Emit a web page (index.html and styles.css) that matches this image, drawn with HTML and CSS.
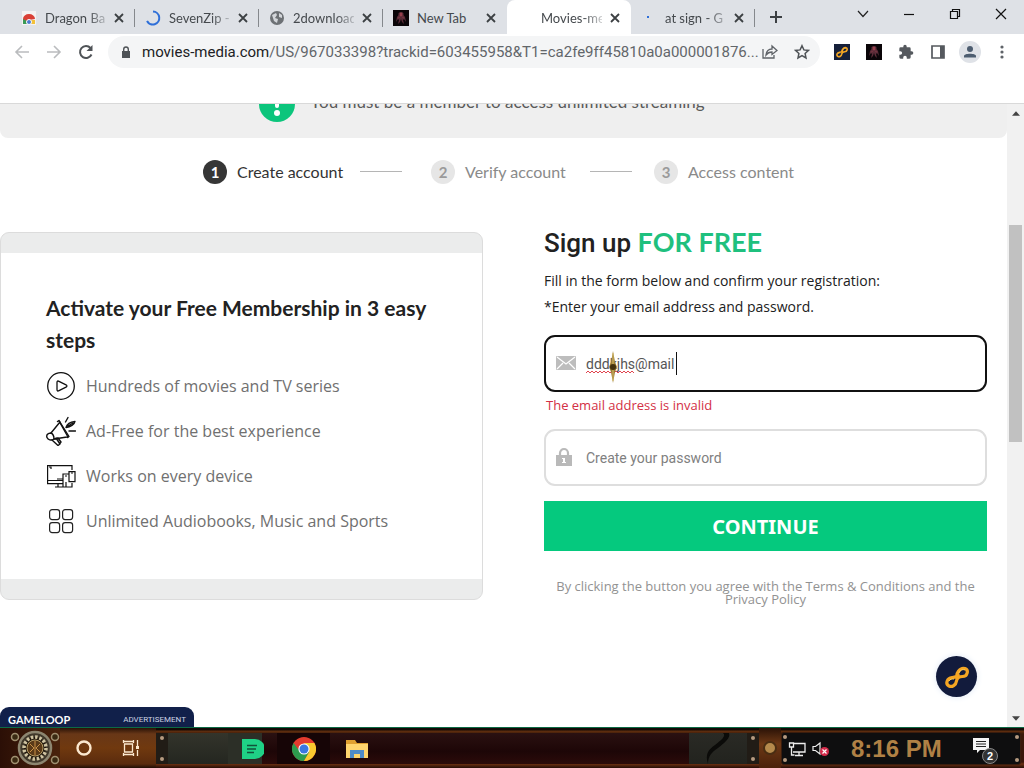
FILE: index.html
```html
<!DOCTYPE html>
<html lang="en">
<head>
<meta charset="utf-8">
<title>Movies-media</title>
<link rel="stylesheet" href="styles.css">
</head>
<body>
<svg class="defs" aria-hidden="true">
  <symbol id="x" viewBox="0 0 10 10"><path d="M1 1l8 8M9 1l-8 8" stroke="#3c4043" stroke-width="1.8" fill="none"/></symbol>
  <symbol id="loop" viewBox="0 0 24 24">
    <path d="M12.500 13.500C10 9 15 2 20 3.500c4 1.500 2.500 8-2.500 8-3.500 0-5.500 1-6 4.500-.5 4-4.500 6.500-7.500 5-4-2-2-8 3-8.500 3.500-.4 5-.5 6-3" fill="none" stroke="#f5a623" stroke-width="3.200" stroke-linecap="round"/>
    <path d="M14 8c1-3 4-4 6-3M4 16c1-2 3-2 5-2" fill="none" stroke="#ffd05a" stroke-width="1"/>
  </symbol>
  <symbol id="figure" viewBox="0 0 16 16">
    <rect width="16" height="16" fill="#0a0508"/>
    <path d="M8 2c2 0 3 1 2.500 3L12 7l1 5-2-3-1 1 1 4-2-2-1-3-1 3-2 2 1-4-1-1-2 3 1-5 1.500-2C5 3 6 2 8 2z" fill="#5b2c38"/>
    <path d="M7 3h2v3H7zM5 8l2-1M11 8L9 7" fill="#98404d" stroke="#98404d" stroke-width=".5"/>
  </symbol>
</svg>

<header class="tabs">
  <div class="tab">
    <svg class="fav" viewBox="0 0 16 16"><rect x="1" y="1" width="14" height="14" fill="#f4f2f2"/><path d="M2 13V9a6 5 0 0 1 12 0l-6 1z" fill="#d93f35"/><path d="M2 14V9l6 3v2z" fill="#3a9a55"/><path d="M9 10h5v4H9z" fill="#f3c13a"/><circle cx="8" cy="12" r="2.500" fill="#4a78cf" stroke="#fff"/></svg>
    <span class="title">Dragon Bal</span><button class="close" aria-label="Close tab"><svg><use href="#x"/></svg></button>
  </div>
  <div class="tab">
    <svg class="fav" viewBox="0 0 16 16"><path d="M8 1.500a6.500 6.500 0 1 1-6 9.500" fill="none" stroke="#2f6fd8" stroke-width="2"/></svg>
    <span class="title">SevenZip -</span><button class="close" aria-label="Close tab"><svg><use href="#x"/></svg></button>
  </div>
  <div class="tab">
    <svg class="fav" viewBox="0 0 16 16"><circle cx="8" cy="8" r="7" fill="#6d7175"/><path d="M3 5l4-2 1 2-2 3 3 1-1 4-3-2-1-3zM10 3l3 2v3l-3-1z" fill="#d3d6da"/></svg>
    <span class="title">2download</span><button class="close" aria-label="Close tab"><svg><use href="#x"/></svg></button>
  </div>
  <div class="tab last">
    <svg class="fav"><use href="#figure"/></svg>
    <span class="title">New Tab</span><button class="close" aria-label="Close tab"><svg><use href="#x"/></svg></button>
  </div>
  <div class="tab active">
    <span class="fav"></span>
    <span class="title">Movies-me</span><button class="close" aria-label="Close tab"><svg><use href="#x"/></svg></button>
  </div>
  <div class="tab">
    <svg class="fav" viewBox="0 0 16 16"><rect x="6" y="6" width="2" height="2" fill="#2f6fd8"/></svg>
    <span class="title">at sign - G</span><button class="close" aria-label="Close tab"><svg><use href="#x"/></svg></button>
  </div>
  <button class="new" aria-label="New tab"><svg viewBox="0 0 12 12"><path d="M6 0v12M0 6h12" stroke="#3c4043" stroke-width="2"/></svg></button>
  <div class="win">
    <button aria-label="Search tabs"><svg viewBox="0 0 12 12"><path d="M1 3l5 5.500L11 3" fill="none" stroke="#222" stroke-width="1.200"/></svg></button>
    <button aria-label="Minimize"><svg viewBox="0 0 12 12"><path d="M1 6.500h10" stroke="#111" stroke-width="1.200"/></svg></button>
    <button aria-label="Restore"><svg viewBox="0 0 12 12"><path d="M1.500 3.500h7v7h-7zM3.500 3V1.500h7v7H9" fill="none" stroke="#111" stroke-width="1.200"/></svg></button>
    <button aria-label="Close"><svg viewBox="0 0 12 12"><path d="M1 1l10 10M11 1L1 11" stroke="#111" stroke-width="1.200"/></svg></button>
  </div>
</header>

<nav class="toolbar">
  <button class="tool" aria-label="Back"><svg viewBox="0 0 16 16"><path d="M15 8H2M8 2L2 8l6 6" fill="none" stroke="#babcbe" stroke-width="1.600"/></svg></button>
  <button class="tool" aria-label="Forward"><svg viewBox="0 0 16 16"><path d="M1 8h13M8 2l6 6-6 6" fill="none" stroke="#babcbe" stroke-width="1.600"/></svg></button>
  <button class="tool" aria-label="Reload"><svg viewBox="0 0 16 16"><path d="M13.500 10.500A6 6 0 1 1 12.500 4" fill="none" stroke="#4f5357" stroke-width="2"/><path d="M14.500 1v6h-6z" fill="#4f5357"/></svg></button>
  <div class="omni">
    <svg class="lock" viewBox="0 0 10 13"><path d="M1 5h8v7H1z" fill="#4f5357"/><path d="M2.700 5V3.300a2.300 2.300 0 0 1 4.600 0V5" fill="none" stroke="#4f5357" stroke-width="1.400"/></svg>
    <span class="url"><b>movies-media.com</b>/US/967033398?trackid=603455958&amp;T1=ca2fe9ff45810a0a000001876...</span>
    <button class="tool" aria-label="Share"><svg viewBox="0 0 16 16"><path d="M1 5v9h11v-3" fill="none" stroke="#5f6368" stroke-width="1.300"/><path d="M4 11c.5-4 3-6 6-6V2l5 4.500-5 4V8c-3 0-4.500 1-6 3z" fill="none" stroke="#5f6368" stroke-width="1.300"/></svg></button>
    <button class="tool" aria-label="Bookmark"><svg viewBox="0 0 16 16"><path d="M8 1.700l1.900 4.200 4.600.5-3.400 3.100.9 4.500-4-2.300L4 14l.9-4.500L1.500 6.400l4.600-.5z" fill="none" stroke="#4f5357" stroke-width="1.500"/></svg></button>
  </div>
  <button class="tool" aria-label="GameLoop"><svg viewBox="0 0 16 16"><rect width="16" height="16" fill="#16203a"/><use href="#loop" x="2" y="2" width="12" height="12"/></svg></button>
  <button class="tool" aria-label="Theme"><svg><use href="#figure"/></svg></button>
  <button class="tool" aria-label="Extensions"><svg viewBox="0 0 24 24"><path d="M20.500 11H19V7a2 2 0 0 0-2-2h-4V3.500a2.500 2.500 0 0 0-5 0V5H4a2 2 0 0 0-2 2v3.800h1.500a2.700 2.700 0 0 1 0 5.400H2V20a2 2 0 0 0 2 2h3.800v-1.500a2.700 2.700 0 0 1 5.400 0V22H17a2 2 0 0 0 2-2v-4h1.500a2.500 2.500 0 0 0 0-5z" fill="#55595e"/></svg></button>
  <button class="tool" aria-label="Side panel"><svg viewBox="0 0 16 16"><path d="M2 2h12v12H2z" fill="none" stroke="#55595e" stroke-width="1.700"/><path d="M10 2h4v12h-4z" fill="#55595e"/></svg></button>
  <button class="tool avatar" aria-label="Profile"><svg viewBox="0 0 22 22"><circle cx="11" cy="11" r="11" fill="#dfe2e7"/><circle cx="11" cy="8" r="3" fill="#4d5d70"/><path d="M5 16.500v-1.500c0-3 12-3 12 0v1.500z" fill="#4d5d70"/></svg></button>
  <button class="tool" aria-label="Menu"><svg viewBox="0 0 16 16"><g fill="#5f6368"><circle cx="8" cy="3" r="1.600"/><circle cx="8" cy="8" r="1.600"/><circle cx="8" cy="13" r="1.600"/></g></svg></button>
</nav>
<div class="bookmarks"></div>

<div class="view">
  <main class="page">
    <div class="banner">
      <svg class="alert" viewBox="0 0 36 36"><circle cx="18" cy="18" r="18" fill="#0cc57c"/><path d="M18 8v12" stroke="#fff" stroke-width="4" stroke-linecap="round"/><circle cx="18" cy="27" r="3" fill="#fff"/></svg>
      <p>You must be a member to access unlimited streaming</p>
    </div>

    <ol class="steps">
      <li class="step on"><i>1</i>Create account</li>
      <li class="rule"></li>
      <li class="step"><i>2</i>Verify account</li>
      <li class="rule late"></li>
      <li class="step"><i>3</i>Access content</li>
    </ol>

    <div class="cols">
      <section class="card">
        <div class="inner">
          <h2>Activate your Free Membership in 3 easy steps</h2>
          <ul>
            <li><svg viewBox="0 0 30 30"><g fill="none" stroke="#111" stroke-width="1.300"><circle cx="15" cy="15" r="13.300"/><path d="M11 11.500c0-1.500.8-1.800 2-1.200l7 3.500c1.200.7 1.200 1.700 0 2.400l-7 3.500c-1.200.6-2 .3-2-1.200z"/></g></svg>Hundreds of movies and TV series</li>
            <li><svg viewBox="0 0 30 30"><g fill="none" stroke="#111" stroke-width="1.400" stroke-linejoin="round" stroke-linecap="round"><path d="M13 5l9 16M14 6L5 17M21 21l-13 2"/><path d="M11.500 5.500l1.500-1L23 20.500l-1.500 1M5 17c-3 0-5 2-4 4.500S5 25 8 23c0-3-1-5-3-6z"/><path d="M6 24l6 5.500 2-1.500-4-6M9 23l3-1 3 4-1.500 2M19.500 6L22 1.500M23 15h6.500M20 11.500c1-3.500 4-5.500 9-6-.5 3-4.500 5.500-9 6zM22 10l5-3"/></g></svg>Ad-Free for the best experience</li>
            <li><svg viewBox="0 0 30 30"><g fill="none" stroke="#111" stroke-width="1.200"><path d="M26 9V4.600H1.600v18h16M1.600 19.500h15M12 23v3M9 26h17M17 26V13h6M23 10.600h6v10h-6zM20 21v5h6v-4M11 18h6"/><path d="M3 6h2v2M25 12h2M19 15h2"/></g></svg>Works on every device</li>
            <li><svg viewBox="0 0 30 30"><g fill="none" stroke="#222" stroke-width="1.200"><rect x="3.600" y="3.600" width="10" height="10" rx="2.500"/><rect x="16.600" y="3.600" width="10" height="10" rx="2.500"/><rect x="3.600" y="16.600" width="10" height="10" rx="2.500"/><rect x="16.600" y="16.600" width="10" height="10" rx="2.500"/></g></svg>Unlimited Audiobooks, Music and Sports</li>
          </ul>
        </div>
      </section>

      <form class="signup">
        <h1>Sign up <span>FOR FREE</span></h1>
        <p class="lead">Fill in the form below and confirm your registration:<br>*Enter your email address and password.</p>
        <div class="field">
          <svg class="ico" viewBox="0 0 20 14"><rect width="20" height="14" rx="1" fill="#bdbdbd"/><path d="M1 1l9 7 9-7M1 13l6-6M19 13l-6-6" fill="none" stroke="#fff" stroke-width="1.200"/></svg>
          <input class="focus" type="text" aria-label="Email address" value="dddkjhs@mail">
          <svg class="squiggle" viewBox="0 0 48 4"><path d="M0 3l2-2 2 2 2-2 2 2 2-2 2 2 2-2 2 2 2-2 2 2 2-2 2 2 2-2 2 2 2-2 2 2 2-2 2 2 2-2 2 2 2-2 2 2 2-2 2 2" fill="none" stroke="#e0454f" stroke-width="1"/></svg>
          <span class="caret"></span>
          <svg class="pointer" viewBox="0 0 8 32"><path d="M4 0l2 11 2 5-2 5-2 11-2-11-2-5 2-5z" fill="#9a7c35"/><path d="M4 2v28" stroke="#d8bd6a"/><circle cx="4" cy="16" r="3" fill="#43320f"/></svg>
        </div>
        <p class="error">The email address is invalid</p>
        <div class="field">
          <svg class="ico pad" viewBox="0 0 16 18"><path d="M0 7h16v11H0z" fill="#b9b9b9"/><path d="M4 7V5a4 4 0 0 1 8 0v2" fill="none" stroke="#b9b9b9" stroke-width="2.200"/><path d="M6 10h3v4h1v1H6v-1h1v-3H6z" fill="#fff"/></svg>
          <input type="password" aria-label="Password" placeholder="Create your password">
        </div>
        <button class="go" type="button">CONTINUE</button>
        <p class="terms">By clicking the button you agree with the Terms &amp; Conditions and the Privacy Policy</p>
      </form>
    </div>
  </main>
  <div class="scroll">
    <svg viewBox="0 0 9 5"><path d="M0 5l4.500-5L9 5z" fill="#444"/></svg>
    <div class="track"><div class="thumb"></div></div>
    <svg viewBox="0 0 9 5"><path d="M0 0l4.500 5L9 0z" fill="#444"/></svg>
  </div>
  <button class="fab" aria-label="GameLoop"><svg><use href="#loop"/></svg></button>
  <div class="ad"><b>GAMELOOP</b><span>ADVERTISEMENT</span></div>
</div>

<footer class="taskbar">
  <button class="start" aria-label="Start">
    <svg viewBox="0 0 60 38">
      <g fill="#3a2a12" stroke="#a09070" stroke-width="1.500"><circle cx="15" cy="8" r="3.500"/><circle cx="55" cy="8" r="3.500"/><circle cx="15" cy="31" r="3.500"/><circle cx="55" cy="31" r="3.500"/></g>
      <circle cx="35" cy="19" r="16" fill="#41392b" stroke="#8d8670" stroke-width="2.500"/>
      <circle cx="35" cy="19" r="11" fill="#20170c" stroke="#cfc3a0" stroke-width="3.500" stroke-dasharray="2.500 1.800"/>
      <circle cx="35" cy="19" r="8" fill="#5a3a18" stroke="#b59a62"/>
      <path d="M35 12v14M30 15l4 4-4 4M40 15l-4 4 4 4" stroke="#c99046" fill="none"/>
    </svg>
  </button>
  <div class="leather">
    <button aria-label="Search"><svg viewBox="0 0 18 18"><circle cx="9" cy="9" r="6.500" fill="none" stroke="#fbe8cf" stroke-width="2.400"/></svg></button>
    <button aria-label="Task view"><svg viewBox="0 0 18 18"><path d="M1 2.500h11M1 15.500h11M2.500 5h8v8h-8zM1.500 1v3M11.500 1v3M1.500 14v3M11.500 14v3M15.500 1v6M15.500 11v6" fill="none" stroke="#fbe8cf" stroke-width="1.300"/><path d="M14 7h3v3h-3z" fill="#fbe8cf"/></svg></button>
  </div>
  <div class="apps">
    <div class="rivets"><i></i><i></i></div>
    <div class="slot"></div>
    <button class="msg" aria-label="Messages"><svg viewBox="0 0 22 22"><path d="M0 1h13a10 10 0 0 1 0 20H0z" fill="#1fd286"/><path d="M5 7.500h10M5 11h9M5 14.500h7" stroke="#11533a" stroke-width="1.500"/></svg></button>
    <button class="chrome" aria-label="Chrome"><svg viewBox="0 0 24 24"><circle cx="12" cy="12" r="12" fill="#e33b2e"/><path d="M1.600 6A12 12 0 0 0 12 24l5.200-9L12 12H6z" fill="#2d9c4e"/><path d="M12 24A12 12 0 0 0 22.400 6H12l5.200 9z" fill="#f9c92f"/><circle cx="12" cy="12" r="5.600" fill="#fff"/><circle cx="12" cy="12" r="4.500" fill="#3b78e0"/></svg></button>
    <button aria-label="File Explorer"><svg viewBox="0 0 24 22"><path d="M1 2h9l2 3h11v15H1z" fill="#e0a030"/><path d="M1 6h22v14H1z" fill="#ffd56e"/><path d="M5 20v-8h14v8h-4v-4H9v4z" fill="#4f8bc8"/></svg></button>
    <div class="worn"><svg viewBox="0 0 58 31"><path d="M34 0c4 3-3 8-8 12-7 5-10 9-7 19 0-8 4-12 10-16 6-5 13-10 11-15z" fill="#0b0b09"/></svg></div>
    <div class="rivets"><i></i><i></i></div>
  </div>
  <div class="knob"></div>
  <div class="tray">
    <div class="rivets"><i></i><i></i></div>
    <svg class="net" viewBox="0 0 18 16"><path d="M5 2.500h12v8.500H5M11 11v3M7 14.500h8M1.500 2h4v4h-4zM3.500 6v8h3" fill="none" stroke="#eee" stroke-width="1.300"/></svg>
    <svg class="vol" viewBox="0 0 18 16"><path d="M1 5.500h2.500L8 2v11L3.500 9.500H1z" fill="none" stroke="#eee" stroke-width="1.200"/><circle cx="12.500" cy="10.500" r="4.500" fill="#d32a4a"/><path d="M10.500 8.500l4 4M14.500 8.500l-4 4" stroke="#fff" stroke-width="1.200"/></svg>
    <time>8:16 PM</time>
    <button class="note" aria-label="Notifications"><svg viewBox="0 0 24 24"><path d="M0 1h16v12H7l-3 3v-3H0z" fill="#f5f5f5"/><path d="M3 4.500h10M3 7h10M3 9.500h10" stroke="#222"/></svg><b>2</b></button>
    <div class="rivets"><i></i><i></i></div>
  </div>
</footer>
</body>
</html>
```
FILE: styles.css
```css
* { box-sizing: border-box; }
body {
  margin: 0;
  height: 100vh;
  display: flex;
  flex-direction: column;
  overflow: hidden;
  background: #fff;
  color: #212121;
  font-family: "Open Sans", "Noto Sans", sans-serif;
}
button { border: 0; padding: 0; margin: 0; background: none; font: inherit; color: inherit; display: flex; align-items: center; justify-content: center; }
h1, h2, p, ol, ul { margin: 0; padding: 0; font-weight: 400; }
li { list-style: none; }
svg { display: block; flex: none; }
.defs { position: absolute; width: 0; height: 0; }

/* Browser tabs */
.tabs { display: flex; height: 34px; flex: none; padding-left: 11px; background: #dee1e6; }
.tab { position: relative; flex: 0 1 124px; min-width: 0; display: flex; align-items: center; gap: 8px; padding: 2px 11px 0 10px; font-family: Lato, sans-serif; font-size: 13px; color: #45494d; }
.tab::after { content: ""; position: absolute; right: 0; top: 9px; width: 1px; height: 18px; background: #85888c; }
.tab.last::after, .tab.active::after { display: none; }
.tab.active { background: #fff; border-radius: 8px 8px 0 0; }
.fav { width: 16px; height: 16px; flex: none; }
.title { flex: 1; min-width: 0; white-space: nowrap; -webkit-mask-image: linear-gradient(90deg, #000 70%, transparent 110%); mask-image: linear-gradient(90deg, #000 70%, transparent 110%); }
.tab.last .title { -webkit-mask-image: none; mask-image: none; }
.close svg { width: 10px; height: 10px; }
.new { width: 42px; }
.new svg { width: 12px; height: 12px; }
.win { margin-left: auto; display: flex; height: 28px; }
.win button { width: 46px; }
.win svg { width: 12px; height: 12px; }

/* Toolbar */
.toolbar { display: flex; align-items: center; height: 36px; flex: none; padding: 0 6px; }
.tool { width: 32px; height: 32px; flex: none; }
.tool svg { width: 16px; height: 16px; }
.tool.avatar svg { width: 22px; height: 22px; }
.omni { flex: 1; min-width: 0; display: flex; align-items: center; height: 32px; margin: 0 6px; padding: 0 2px 0 13px; border-radius: 16px; background: #f4f5f6; }
.lock { width: 10px; height: 13px; margin-right: 11px; }
.url { flex: 1; min-width: 0; white-space: nowrap; font-family: Roboto, sans-serif; font-size: 15px; color: #62666a; }
.url b { font-weight: 400; color: #202124; }
.bookmarks { height: 34px; flex: none; border-bottom: 1px solid #d9d9d9; }

/* Web page */
.view { position: relative; flex: 1; min-height: 0; display: flex; }
.page { flex: 1; min-width: 0; overflow: hidden; }
.banner { display: flex; align-items: flex-end; justify-content: center; gap: 15px; height: 34px; padding: 0 43px 16px 0; overflow: hidden; border-radius: 0 0 8px 8px; background: #efefef; color: #5a5a5a; }
.banner p { line-height: 40px; font-family: Lato, sans-serif; font-size: 17px; }
.alert { width: 36px; height: 36px; }
.steps { display: flex; align-items: center; height: 67px; padding-left: 203px; font-family: Lato, sans-serif; font-size: 16px; color: #8a8a8a; white-space: nowrap; }
.step { flex: none; display: flex; align-items: center; gap: 10px; width: 131px; }
.step.on { width: 136px; color: #333; }
.step i { flex: none; display: flex; align-items: center; justify-content: center; width: 24px; height: 24px; border-radius: 50%; background: #e6e6e6; color: #9a9a9a; font-size: 15px; font-weight: 700; font-style: normal; }
.step.on i { background: #363636; color: #fff; }
.rule { width: 42px; height: 1px; margin: 0 29px 0 21px; background: #b5b5b5; }
.rule.late { margin: 0 22px 0 28px; }
.cols { display: grid; grid-template-columns: 483fr 443fr; gap: 61px; align-items: start; margin-top: 27px; padding-right: 20px; }

.card { padding: 20px 0; border: 1px solid #dcdcdc; border-radius: 9px; background: #ebecec; }
.inner { padding: 39px 45px 36px; background: #fff; }
.card h2 { font-family: Lato, sans-serif; font-size: 21px; line-height: 32px; font-weight: 700; color: #222; }
.card ul { padding-top: 7px; }
.card li { display: flex; align-items: center; gap: 10px; height: 45px; font-size: 16px; color: #707070; }
.card li svg { width: 30px; height: 30px; }

.signup h1 { height: 32px; font-family: Roboto, sans-serif; font-size: 26px; line-height: 32px; margin-top: -6px; font-weight: 500; white-space: nowrap; }
.signup h1 span { font-family: Lato, sans-serif; font-size: 27px; font-weight: 700; color: #1fc07e; }
.lead { margin-top: 10px; font-size: 14px; line-height: 26px; white-space: nowrap; }
.field { position: relative; margin-top: 15px; }
.field input { display: block; width: 100%; height: 57px; padding: 0 20px 0 40px; border: 2px solid #dedede; border-radius: 11px; outline: 0; background: #fff; font-family: Roboto, sans-serif; font-size: 14px; color: #555; }
.field input.focus { border-color: #111; }
.field input::placeholder { color: #808080; opacity: 1; }
.ico { position: absolute; left: 12px; top: 18px; width: 20px; height: 20px; }
.ico.pad { width: 16px; }
.squiggle { position: absolute; left: 42px; top: 35px; width: 48px; height: 4px; }
.caret { position: absolute; left: 132px; top: 17px; width: 1px; height: 23px; background: #111; }
.pointer { position: absolute; left: 65px; top: 16px; width: 8px; height: 32px; }
.error { height: 22px; padding-left: 2px; font-size: 13px; line-height: 26px; color: #d32f45; }
.go { width: 100%; height: 50px; margin-top: 15px; background: #05c97e; color: #fff; font-family: "Noto Sans", sans-serif; font-size: 20px; font-weight: 700; }
.terms { padding: 29px 10px 0; text-align: center; font-size: 13px; line-height: 13px; color: #929292; }

.scroll { width: 17px; flex: none; display: flex; flex-direction: column; align-items: center; padding: 7px 2px 6px; background: #f1f1f1; }
.scroll svg { width: 8px; height: 5px; }
.track { flex: 1; width: 100%; padding-top: 109px; }
.thumb { height: 217px; background: #c1c1c1; }
.fab { position: absolute; right: 47px; bottom: 30px; width: 41px; height: 41px; border-radius: 50%; background: #121b3c; box-shadow: 0 0 6px #dfe8f5; }
.fab svg { width: 24px; height: 24px; }
.ad { position: absolute; left: 0; bottom: 0; display: flex; align-items: center; justify-content: space-between; width: 194px; height: 20px; padding: 4px 8px 0; border-radius: 9px 9px 0 0; background: #11204a; color: #cdd3e2; font-family: Roboto, sans-serif; font-size: 8px; }
.ad b { font-family: Lato, sans-serif; font-size: 11px; font-weight: 700; color: #fff; }

/* Desktop taskbar */
.taskbar { display: flex; height: 41px; flex: none; padding-right: 3px; border-top: 1px solid #0d6a45; background: linear-gradient(#120906 0 2px, #63300f 3px, #3a1a0a 6px, #3a1509 34px, #6b3012 36px, #250d06); }
.start { width: 60px; background: linear-gradient(90deg, #2b0f06, #4a230c); }
.start svg { width: 60px; height: 38px; }
.leather { display: flex; width: 96px; background: linear-gradient(#2a1207, #683717 15%, #70390f 50%, #5a2b0e 90%, #200d05); }
.leather button { width: 47px; }
.leather svg { width: 18px; height: 18px; }
.apps { flex: 1; min-width: 0; display: flex; margin: 5px 0 4px; border-radius: 4px; background: linear-gradient(#2a1111, #1d0607 60%, #2c0b0a); }
.slot { width: 60px; background: linear-gradient(#33342b, #242620); }
.apps button { width: 53px; }
.apps button.msg { width: 49px; background: linear-gradient(90deg, #2c2f27 70%, transparent 70%); }
.apps button.chrome { background: #160506; }
.apps svg { width: 24px; height: 24px; }
.apps .msg svg { width: 22px; height: 22px; }
.worn { margin-left: auto; background: linear-gradient(#2a2a25, #22231e); }
.apps .worn svg { width: 58px; height: 31px; }
.rivets { display: flex; flex-direction: column; justify-content: space-between; padding: 3px 4px; background: #211c16; }
.rivets i { width: 4px; height: 4px; border-radius: 50%; background: #b59a80; }
.knob { width: 22px; display: flex; align-items: center; justify-content: center; background: linear-gradient(#2a1207, #6d3815 40%, #4a210b); }
.knob::before { content: ""; width: 10px; height: 10px; border-radius: 50%; border: 2px solid #4a2d12; background: #b58a4c; }
.tray { display: flex; align-items: center; width: 240px; margin: 4px 0 3px; border-radius: 3px; border: 1px solid #3a1d0e; background: #0e0e0f; }
.tray .rivets { align-self: stretch; background: none; padding: 2px 1px; }
.net { width: 18px; height: 16px; }
.vol { width: 18px; height: 16px; margin-left: 6px; }
.tray time { margin-left: 21px; font-family: "Liberation Sans", sans-serif; font-size: 24px; line-height: 32px; font-weight: 700; color: #b08145; white-space: nowrap; }
.note { position: relative; margin-left: auto; margin-right: 16px; width: 26px; height: 24px; }
.note svg { width: 24px; height: 24px; }
.note b { position: absolute; right: 0; bottom: -3px; width: 16px; height: 16px; border-radius: 50%; border: 1px solid #888; background: #333; color: #fff; font-family: "Liberation Sans", sans-serif; font-size: 11px; line-height: 14px; text-align: center; }
```
